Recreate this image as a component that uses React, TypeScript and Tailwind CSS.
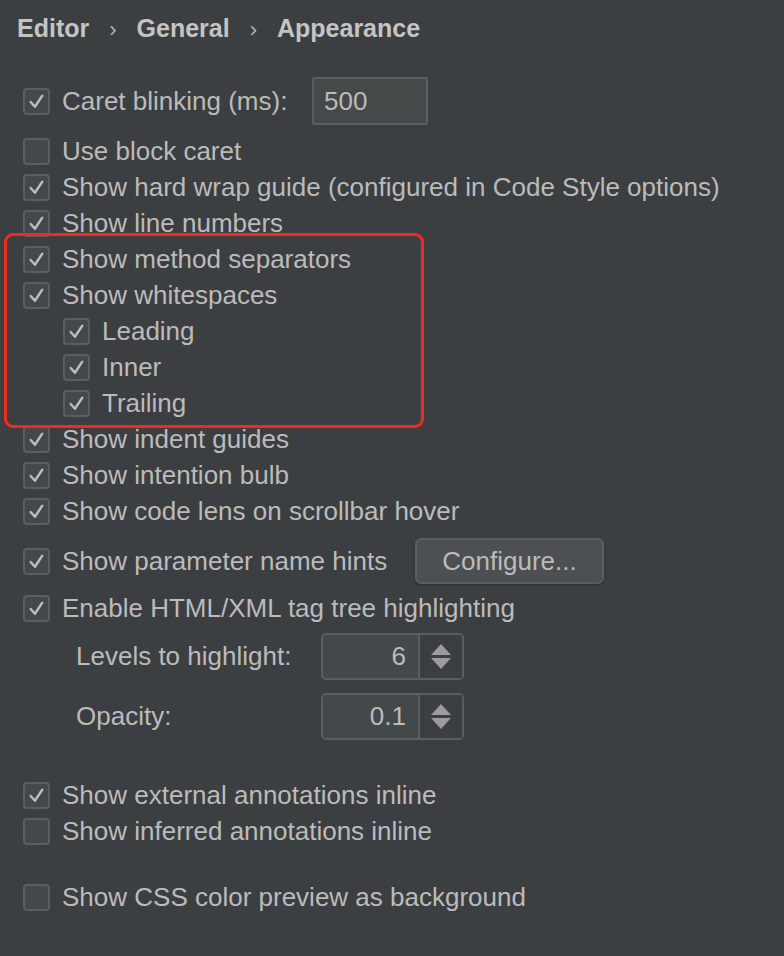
import React from 'react';

const font = { fontFamily: '"Liberation Sans", Arial, sans-serif' };

function Check({ on }: { on: boolean }) {
  return (
    <div className="flex h-[27px] w-[27px] shrink-0 items-center justify-center rounded-[4px] border-2 border-[#5b5e60] bg-[#43494a]">
      {on && (
        <svg width="19" height="19" viewBox="0 0 18 18" fill="none">
          <polyline points="3.5,9.5 7.5,14 14.5,3.5" stroke="#bdbdbd" strokeWidth="2.3" strokeLinecap="round" strokeLinejoin="round" />
        </svg>
      )}
    </div>
  );
}

function Row({ label, on = true, indent = false, className = 'h-9' }: { label: string; on?: boolean; indent?: boolean; className?: string }) {
  return (
    <div className={`flex items-center ${indent ? 'pl-[63px]' : 'pl-[23px]'} ${className}`}>
      <Check on={on} />
      <span className="ml-[12px] whitespace-nowrap text-[26px] text-[#bbbbbb]">{label}</span>
    </div>
  );
}

function Spinner({ label, value, className }: { label: string; value: string; className: string }) {
  return (
    <div className={`flex items-center ${className}`}>
      <span className="w-[321px] shrink-0 whitespace-nowrap pl-[76px] text-[26px] text-[#bbbbbb]">{label}</span>
      <div className="flex h-[47px] w-[143px] rounded-[5px] border-2 border-[#5b5e60] bg-[#43494a]">
        <div className="flex flex-1 items-center justify-end pr-[12px] text-[26px] text-[#bbbbbb]">{value}</div>
        <div className="flex w-[44px] flex-col items-center justify-center gap-[3px] border-l-2 border-[#5b5e60] bg-[#3c3f41]">
          <svg width="20" height="11" viewBox="0 0 20 11"><polygon points="10,0 20,11 0,11" fill="#9a9c9e" /></svg>
          <svg width="20" height="11" viewBox="0 0 20 11"><polygon points="0,0 20,0 10,11" fill="#9a9c9e" /></svg>
        </div>
      </div>
    </div>
  );
}

function Chevron() {
  return <span className="mx-[20px] text-[22px] font-normal text-[#b0b0b0]">›</span>;
}

export default function App() {
  return (
    <div style={font} className="relative h-[956px] w-[784px] overflow-hidden bg-[#3c3f41]">
      <div className="flex h-[58px] items-center pl-[17px] text-[25px] font-bold text-[#c4c4c4]">
        <span>Editor</span>
        <Chevron />
        <span>General</span>
        <Chevron />
        <span>Appearance</span>
      </div>

      <div className="mt-[19px] flex h-12 items-center pl-[23px]">
        <Check on />
        <span className="ml-[12px] w-[250px] shrink-0 whitespace-nowrap text-[26px] text-[#bbbbbb]">Caret blinking (ms):</span>
        <div className="flex h-[48px] w-[116px] items-center rounded-[2px] border-2 border-[#5b5e60] bg-[#45494a] pl-[10px] text-[26px] text-[#bbbbbb]">500</div>
      </div>

      <Row label="Use block caret" on={false} className="mt-2 h-9" />
      <Row label="Show hard wrap guide (configured in Code Style options)" />
      <Row label="Show line numbers" />
      <Row label="Show method separators" />
      <Row label="Show whitespaces" />
      <Row label="Leading" indent />
      <Row label="Inner" indent />
      <Row label="Trailing" indent />
      <Row label="Show indent guides" />
      <Row label="Show intention bulb" />
      <Row label="Show code lens on scrollbar hover" />

      <div className="mt-2 flex h-12 items-center pl-[23px]">
        <Check on />
        <span className="ml-[12px] w-[353px] shrink-0 whitespace-nowrap text-[26px] text-[#bbbbbb]">Show parameter name hints</span>
        <button className="h-[46px] w-[189px] rounded-[6px] border-2 border-[#5b5e60] bg-[#4c5052] text-[26px] text-[#bbbbbb] shadow-[0_1px_2px_rgba(0,0,0,0.3)]">
          Configure...
        </button>
      </div>

      <Row label="Enable HTML/XML tag tree highlighting" className="mt-[5px] h-9" />
      <Spinner label="Levels to highlight:" value="6" className="mt-[6px] h-12" />
      <Spinner label="Opacity:" value="0.1" className="mt-3 h-12" />

      <Row label="Show external annotations inline" className="mt-[37px] h-9" />
      <Row label="Show inferred annotations inline" on={false} />
      <Row label="Show CSS color preview as background" on={false} className="mt-[30px] h-9" />

      <div className="pointer-events-none absolute left-[4px] top-[233px] h-[195px] w-[420px] rounded-[9px] border-[3px] border-[#f02a1e]" />
    </div>
  );
}
